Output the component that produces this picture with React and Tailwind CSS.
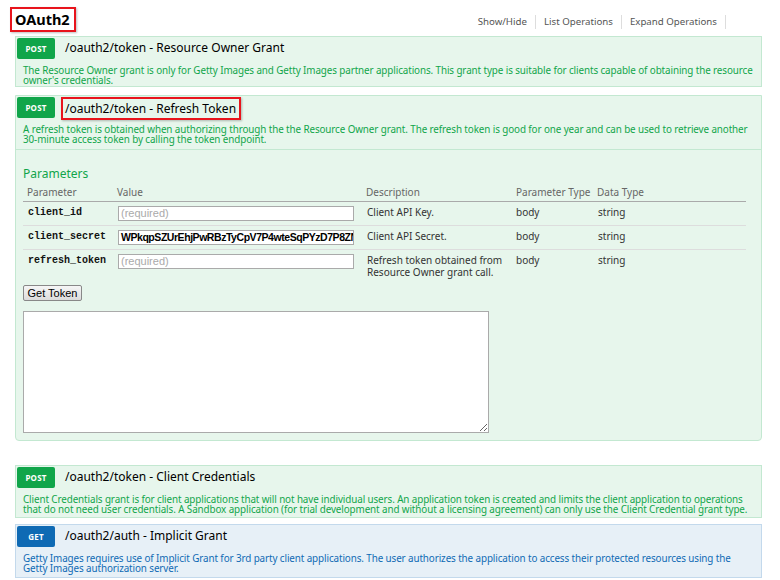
const green = "text-[#10a54a]";

const Badge = ({ method }) => (
  <div
    className={
      "w-[38px] h-[21px] mt-px ml-px rounded-[2px] flex items-center justify-center text-white text-[8px] font-bold tracking-wide " +
      (method === "GET" ? "bg-[#0f6ab4]" : "bg-[#10a54a]")
    }
  >
    {method}
  </div>
);

const Heading = ({ method, path, boxed }) => (
  <div className="h-[22px] flex items-start">
    <Badge method={method} />
    {boxed ? (
      <div className="ml-[6px] mt-px h-[23px] w-[180px] border-2 border-[#e8141c] shadow-[1px_1px_2px_rgba(0,0,0,0.25)] flex items-center pl-[2px] whitespace-nowrap text-[12px] text-black">
        {path}
      </div>
    ) : (
      <div className="ml-[10px] h-[22px] flex items-center whitespace-nowrap text-[12px] text-black">{path}</div>
    )}
  </div>
);

const Desc = ({ children, blue }) => (
  <p
    className={
      "pl-[7px] pr-[5px] pt-[6px] pb-[3px] text-[9.85px] leading-[10px] tracking-[-0.1px] " +
      (blue ? "text-[#0f6ab4]" : "text-[#10a54a]")
    }
  >
    {children}
  </p>
);

const params = [
  { name: "client_id", value: "", desc: "Client API Key." },
  { name: "client_secret", value: "WPkqpSZUrEhjPwRBzTyCpV7P4wteSqPYzD7P8ZNzVnqW", desc: "Client API Secret." },
  { name: "refresh_token", value: "", desc: "Refresh token obtained from Resource Owner grant call." },
];

export default function App() {
  return (
    <div className="w-[780px] h-[580px] overflow-hidden bg-white font-['Noto_Sans',sans-serif]">
      <div className="h-[36px] flex items-start justify-between">
        <div className="mt-[7px] ml-[10px] h-[25px] w-[66px] border-2 border-[#e8141c] shadow-[1px_1px_2px_rgba(0,0,0,0.25)] flex items-center pl-[3px] text-[14.5px] font-bold text-black">
          OAuth2
        </div>
        <ul className="mt-[15px] mr-[54px] flex text-[9.7px] text-[#555] leading-[14px]">
          <li className="px-[8px] border-r border-[#ddd]">Show/Hide</li>
          <li className="px-[8px] border-r border-[#ddd]">List Operations</li>
          <li className="px-[8px] border-r border-[#ddd]">Expand Operations</li>
        </ul>
      </div>

      <div className="pl-[15px] pr-[18px]">
        <div className="h-[51px] border border-[#c3e8d1] bg-[#e7f6ec]">
          <Heading method="POST" path="/oauth2/token - Resource Owner Grant" />
          <Desc>
            The Resource Owner grant is only for Getty Images and Getty Images partner applications. This grant type is
            suitable for clients capable of obtaining the resource owner's credentials.
          </Desc>
        </div>

        <div className="mt-[8px] h-[346px] border border-[#c3e8d1] bg-[#e7f6ec] rounded-b-[4px]">
          <Heading method="POST" path="/oauth2/token - Refresh Token" boxed />
          <Desc>
            A refresh token is obtained when authorizing through the the Resource Owner grant. The refresh token is good
            for one year and can be used to retrieve another 30-minute access token by calling the token endpoint.
          </Desc>
          <div className="border-t border-[#c3e8d1] mt-[2px] px-[7px]">
            <h3 className={"mt-[16px] text-[12px] leading-[16px] " + green}>Parameters</h3>
            <div className="mt-[3px] mr-[8px] grid grid-cols-[90px_249px_150px_81px_1fr] text-[10px] text-[#333]">
              <div className="pl-[4px] h-[17px] leading-[14px] text-[#666] border-b border-[#aaa]">Parameter</div>
              <div className="pl-[4px] h-[17px] leading-[14px] text-[#666] border-b border-[#aaa]">Value</div>
              <div className="pl-[4px] h-[17px] leading-[14px] text-[#666] border-b border-[#aaa]">Description</div>
              <div className="pl-[4px] h-[17px] leading-[14px] text-[#666] border-b border-[#aaa]">Parameter Type</div>
              <div className="pl-[4px] h-[17px] leading-[14px] text-[#666] border-b border-[#aaa]">Data Type</div>
              {params.map((p, i) => {
                const last = i === params.length - 1;
                const cell = "pt-[4px] " + (last ? "h-[30px]" : "h-[24px] border-b border-[#ddd]");
                return [
                  <div key={p.name + "n"} className={cell + " pl-[5px] font-['Liberation_Mono',monospace] font-bold text-[10px] leading-[14px] text-[#111]"}>
                    {p.name}
                  </div>,
                  <div key={p.name + "v"} className={cell + " pl-[5px]"}>
                    <div className="w-[236px] h-[15px] bg-white border border-[#aaa] overflow-hidden whitespace-nowrap pl-[2px] font-['Liberation_Sans',sans-serif] text-[11px] leading-[13px]">
                      {p.value ? (
                        <span className="font-bold text-black text-[10.5px] tracking-[-0.45px]">{p.value}</span>
                      ) : (
                        <span className="text-[#aaa]">(required)</span>
                      )}
                    </div>
                  </div>,
                  <div key={p.name + "d"} className={cell + " pl-[5px] leading-[12px] pr-[4px]"}>
                    {p.desc}
                  </div>,
                  <div key={p.name + "t"} className={cell + " pl-[4px] leading-[12px]"}>
                    body
                  </div>,
                  <div key={p.name + "s"} className={cell + " pl-[5px] leading-[12px]"}>
                    string
                  </div>,
                ];
              })}
            </div>
            <button className="block mt-[5px] h-[16px] w-[59px] border border-[#888] rounded-[2px] bg-gradient-to-b from-[#f6f6f6] to-[#dcdcdc] font-['Liberation_Sans',sans-serif] text-[11px] leading-[14px] text-black">
              Get Token
            </button>
            <textarea className="block mt-[10px] w-[466px] h-[122px] bg-white border border-[#aaa] resize-y" />
          </div>
        </div>

        <div className="mt-[24px] h-[53px] border border-[#c3e8d1] bg-[#e7f6ec]">
          <Heading method="POST" path="/oauth2/token - Client Credentials" />
          <Desc>
            Client Credentials grant is for client applications that will not have individual users. An application token
            is created and limits the client application to operations that do not need user credentials. A Sandbox
            application (for trial development and without a licensing agreement) can only use the Client Credential grant
            type.
          </Desc>
        </div>

        <div className="mt-[6px] h-[54px] border border-[#c3d9ec] bg-[#e7f0f7]">
          <Heading method="GET" path="/oauth2/auth - Implicit Grant" />
          <Desc blue>
            Getty Images requires use of Implicit Grant for 3rd party client applications. The user authorizes the
            application to access their protected resources using the Getty Images authorization server.
          </Desc>
        </div>
      </div>
    </div>
  );
}
